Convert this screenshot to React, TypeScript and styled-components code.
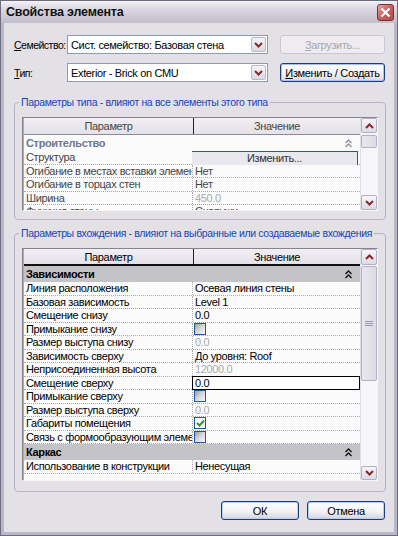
import React from 'react';
import styled, { createGlobalStyle } from 'styled-components';

const GlobalStyle = createGlobalStyle`
  html, body {
    margin: 0;
    padding: 0;
    background: #e4e1e6;
  }
  body {
    font-family: "Liberation Sans", Arial, sans-serif;
    font-size: 10.5px;
    letter-spacing: -0.35px;
    color: #000;
  }
`;

type Cell =
  | { t: 'text'; v: string }
  | { t: 'dim'; v: string }
  | { t: 'check'; on?: boolean }
  | { t: 'edit'; v: string }
  | { t: 'button'; v: string };

type Row = { cat: string } | { label: string; cell: Cell };

const typeRows: Row[] = [
  { cat: 'Строительство' },
  { label: 'Структура', cell: { t: 'button', v: 'Изменить...' } },
  { label: 'Огибание в местах вставки элемента', cell: { t: 'text', v: 'Нет' } },
  { label: 'Огибание в торцах стен', cell: { t: 'text', v: 'Нет' } },
  { label: 'Ширина', cell: { t: 'dim', v: '450.0' } },
  { label: 'Функция стены', cell: { t: 'text', v: 'Снаружи' } },
];

const instanceRows: Row[] = [
  { cat: 'Зависимости' },
  { label: 'Линия расположения', cell: { t: 'text', v: 'Осевая линия стены' } },
  { label: 'Базовая зависимость', cell: { t: 'text', v: 'Level 1' } },
  { label: 'Смещение снизу', cell: { t: 'text', v: '0.0' } },
  { label: 'Примыкание снизу', cell: { t: 'check' } },
  { label: 'Размер выступа снизу', cell: { t: 'dim', v: '0.0' } },
  { label: 'Зависимость сверху', cell: { t: 'text', v: 'До уровня: Roof' } },
  { label: 'Неприсоединенная высота', cell: { t: 'dim', v: '12000.0' } },
  { label: 'Смещение сверху', cell: { t: 'edit', v: '0.0' } },
  { label: 'Примыкание сверху', cell: { t: 'check' } },
  { label: 'Размер выступа сверху', cell: { t: 'dim', v: '0.0' } },
  { label: 'Габариты помещения', cell: { t: 'check', on: true } },
  { label: 'Связь с формообразующим элементом', cell: { t: 'check' } },
  { cat: 'Каркас' },
  { label: 'Использование в конструкции', cell: { t: 'text', v: 'Ненесущая' } },
];

const Window = styled.div`
  width: 398px;
  height: 536px;
  box-sizing: border-box;
  border: 1px solid #6d6b7e;
  background: #b9b7c8;
  display: flex;
  flex-direction: column;
  overflow: hidden;
`;

const TitleBar = styled.div`
  height: 22px;
  flex: none;
  display: flex;
  align-items: center;
  justify-content: space-between;
  padding: 0 3px 0 5px;
  background: linear-gradient(#f3f2f6 0%, #dedbe4 30%, #cdc9d4 70%, #c2bece 100%);
  font-size: 12.5px;
  font-weight: bold;
  letter-spacing: -0.2px;
  color: #111;
`;

const CloseButton = styled.div`
  width: 17px;
  height: 17px;
  box-sizing: border-box;
  border: 1px solid #7a2e2e;
  border-radius: 3px;
  background: linear-gradient(135deg, #e8a8a8 0%, #cc6464 45%, #b34848 100%);
  display: flex;
  align-items: center;
  justify-content: center;
`;

const Content = styled.div`
  flex: 1;
  margin: 0 3px 3px;
  background: #e4e1e6;
  padding: 12px 0 0 0;
  display: flex;
  flex-direction: column;
`;

const FormRow = styled.div<{ $gap?: number }>`
  display: flex;
  align-items: center;
  height: 19px;
  padding-left: 10px;
  margin-top: ${(p) => p.$gap ?? 0}px;
`;

const Label = styled.span`
  width: 53px;
  flex: none;
  font-size: 10.5px;
  letter-spacing: -0.5px;
  white-space: nowrap;
  u { text-decoration: underline; }
`;

const Select = styled.div`
  width: 201px;
  height: 19px;
  box-sizing: border-box;
  border: 1px solid #8a9bb4;
  background: #fff;
  display: flex;
  align-items: center;
  padding-left: 3px;
  white-space: nowrap;
  overflow: hidden;
  font-size: 11px;
`;

const SelectText = styled.span`
  flex: 1;
  overflow: hidden;
`;

const DropButton = styled.div`
  width: 15px;
  height: 15px;
  margin-right: 1px;
  flex: none;
  box-sizing: border-box;
  border: 1px solid #bab8c8;
  border-radius: 2px;
  background: linear-gradient(#f4f3f8, #dcd9e4);
  display: flex;
  align-items: center;
  justify-content: center;
`;

const PushButton = styled.div<{ $disabled?: boolean; $focus?: boolean; $w: number }>`
  width: ${(p) => p.$w}px;
  height: 19px;
  box-sizing: border-box;
  margin-left: 12px;
  border: 1px solid ${(p) => (p.$disabled ? '#c9c7d0' : '#1c3c7c')};
  border-radius: 3px;
  background: ${(p) =>
    p.$disabled ? '#eeecf0' : 'linear-gradient(#ffffff 0%, #f2f1f4 60%, #d9d7df 100%)'};
  box-shadow: ${(p) => (p.$focus ? 'inset 0 0 0 1px #a8c4ee' : 'none')};
  color: ${(p) => (p.$disabled ? '#a8a6b2' : '#000')};
  display: flex;
  align-items: center;
  justify-content: center;
  white-space: nowrap;
  font-size: 11px;
  u { text-decoration: underline; }
`;

const Group = styled.fieldset<{ $top: number }>`
  margin: ${(p) => p.$top}px 8px 0 10px;
  padding: 8px 7px ${(p) => (p.$top > 10 ? 8 : 10)}px 7px;
  border: 1px solid #b4b2c4;
  border-radius: 4px;
  min-width: 0;
`;

const Legend = styled.legend`
  color: #1646b4;
  padding: 0 2px;
  margin-left: -3px;
  line-height: 13px;
  white-space: nowrap;
  font-size: 10.5px;
`;

const TableFrame = styled.div<{ $h: number }>`
  height: ${(p) => p.$h}px;
  box-sizing: border-box;
  border: 1px solid #85848f;
  border-right-color: #f6f6f8;
  border-bottom-color: #f6f6f8;
  box-shadow: inset 1px 1px 0 #a9a8b3;
  background: #fbfbfc;
  display: flex;
  overflow: hidden;
`;

const GridArea = styled.div`
  flex: 1;
  min-width: 0;
  overflow: hidden;
  padding-left: 1px;
`;

const HeaderRow = styled.div<{ $strong?: boolean }>`
  height: 17px;
  box-sizing: border-box;
  display: grid;
  grid-template-columns: 169px 1fr;
  background: linear-gradient(#f1eff4, #e4e1e8);
  border-bottom: ${(p) => (p.$strong ? '2px solid #111' : '1px solid #8c8a96')};
  color: ${(p) => (p.$strong ? '#000' : '#444')};
  font-size: 11px;
`;

const HeadCell = styled.div`
  display: flex;
  align-items: center;
  justify-content: center;
  & + & {
    border-left: 1px solid #222;
  }
`;

const CatRow = styled.div<{ $muted?: boolean }>`
  height: 16px;
  display: flex;
  align-items: center;
  justify-content: space-between;
  padding: 0 8px 0 2px;
  font-weight: bold;
  font-size: 11px;
  background: ${(p) => (p.$muted ? '#fbfbfc' : '#c4c3c8')};
  color: ${(p) => (p.$muted ? '#6d7891' : '#000')};
`;

const DataRow = styled.div<{ $muted?: boolean }>`
  height: 13.5px;
  box-sizing: border-box;
  display: grid;
  grid-template-columns: 169px 1fr;
  border-bottom: 1px dotted #a9a9ad;
  color: ${(p) => (p.$muted ? '#454545' : '#000')};
  line-height: 12px;
  font-size: 11px;
`;

const NameCell = styled.div`
  padding-left: 2px;
  white-space: nowrap;
  overflow: hidden;
  border-right: 1px dotted #a9a9ad;
`;

const ValueCell = styled.div<{ $dim?: boolean }>`
  padding-left: 2px;
  white-space: nowrap;
  overflow: hidden;
  display: flex;
  align-items: center;
  color: ${(p) => (p.$dim ? '#a9a9ae' : 'inherit')};
`;

const EditCell = styled.div`
  margin: -1px 0 -1px -1px;
  border: 1px solid #000;
  padding-left: 2px;
  background: #fff;
  display: flex;
  align-items: center;
`;

const CellButton = styled.div`
  margin: 0 2px -1px -1px;
  border: 1px solid #2a54b4;
  border-left: none;
  border-bottom: none;
  background: #e9e8ee;
  color: #333;
  display: flex;
  align-items: center;
  justify-content: center;
`;

const Check = styled.div<{ $on?: boolean }>`
  width: 12px;
  height: 12px;
  box-sizing: border-box;
  margin-left: -1px;
  border: 1px solid #1c5a9c;
  background: ${(p) =>
    p.$on ? '#fff' : 'linear-gradient(135deg, #9c9ca4 0%, #d8d8dc 50%, #f8f8fa 100%)'};
  display: flex;
  align-items: center;
  justify-content: center;
`;

const ScrollBar = styled.div`
  width: 16px;
  flex: none;
  display: flex;
  flex-direction: column;
  background: #f6f5f8;
  border-left: 1px solid #e0dee6;
`;

const ScrollBtn = styled.div<{ $h: number }>`
  height: ${(p) => p.$h}px;
  flex: none;
  box-sizing: border-box;
  border: 1px solid #b2b0c2;
  border-radius: 2px;
  background: linear-gradient(#f6f5fa, #dcdae4);
  display: flex;
  align-items: center;
  justify-content: center;
`;

const Track = styled.div`
  flex: 1;
  display: flex;
  flex-direction: column;
`;

const Thumb = styled.div<{ $top: number; $h: number }>`
  margin-top: ${(p) => p.$top}px;
  height: ${(p) => p.$h}px;
  box-sizing: border-box;
  border: 1px solid #b2b0c2;
  border-radius: 2px;
  background: linear-gradient(90deg, #e8e6ee, #dedbe6);
  display: flex;
  align-items: center;
  justify-content: center;
`;

const Footer = styled.div`
  display: flex;
  justify-content: flex-end;
  gap: 8px;
  padding-right: 9px;
  margin-top: 9px;
`;

const DialogButton = styled.div`
  width: 78px;
  height: 19px;
  box-sizing: border-box;
  border: 1px solid #1c3c7c;
  border-radius: 3px;
  background: linear-gradient(#ffffff 0%, #f3f2f5 55%, #d6d4dc 100%);
  box-shadow: inset 0 0 0 1px #b4cdf0;
  display: flex;
  align-items: center;
  justify-content: center;
  font-size: 11px;
`;

const ArrowUp = () => (
  <svg width="9" height="6" viewBox="0 0 9 6">
    <path d="M1 5 L4.5 1.5 L8 5" fill="none" stroke="#862828" strokeWidth="2" />
  </svg>
);

const ArrowDown = () => (
  <svg width="9" height="6" viewBox="0 0 9 6">
    <path d="M1 1 L4.5 4.5 L8 1" fill="none" stroke="#862828" strokeWidth="2" />
  </svg>
);

const Collapse = ({ color }: { color: string }) => (
  <svg width="7" height="9" viewBox="0 0 7 9">
    <path d="M0.5 4 L3.5 1 L6.5 4 M0.5 8 L3.5 5 L6.5 8" fill="none" stroke={color} strokeWidth="1.4" />
  </svg>
);

const Grip = () => (
  <svg width="8" height="6" viewBox="0 0 8 6">
    <path d="M0 0.5 H8 M0 2.5 H8 M0 4.5 H8" stroke="#9a98aa" strokeWidth="1" />
  </svg>
);

const Tick = () => (
  <svg width="9" height="8" viewBox="0 0 9 8">
    <path d="M1 4 L3.5 6.5 L8 1.5" fill="none" stroke="#21a121" strokeWidth="2" />
  </svg>
);

const renderCell = (c: Cell) => {
  switch (c.t) {
    case 'text':
      return <ValueCell>{c.v}</ValueCell>;
    case 'dim':
      return <ValueCell $dim>{c.v}</ValueCell>;
    case 'edit':
      return <EditCell>{c.v}</EditCell>;
    case 'button':
      return <CellButton>{c.v}</CellButton>;
    case 'check':
      return (
        <ValueCell>
          <Check $on={c.on}>{c.on && <Tick />}</Check>
        </ValueCell>
      );
  }
};

type TableProps = {
  rows: Row[];
  height: number;
  muted?: boolean;
  upH: number;
  downH: number;
  thumbTop: number;
  thumbH: number;
};

const PropTable = ({ rows, height, muted, upH, downH, thumbTop, thumbH }: TableProps) => (
  <TableFrame $h={height}>
    <GridArea>
      <HeaderRow $strong={!muted}>
        <HeadCell>Параметр</HeadCell>
        <HeadCell>Значение</HeadCell>
      </HeaderRow>
      {rows.map((r, i) =>
        'cat' in r ? (
          <CatRow key={i} $muted={muted}>
            <span>{r.cat}</span>
            <Collapse color={muted ? '#8a90a0' : '#111'} />
          </CatRow>
        ) : (
          <DataRow key={i} $muted={muted}>
            <NameCell>{r.label}</NameCell>
            {renderCell(r.cell)}
          </DataRow>
        )
      )}
    </GridArea>
    <ScrollBar>
      <ScrollBtn $h={upH}>
        <ArrowUp />
      </ScrollBtn>
      <Track>
        <Thumb $top={thumbTop} $h={thumbH}>
          {thumbH > 40 && <Grip />}
        </Thumb>
      </Track>
      <ScrollBtn $h={downH}>
        <ArrowDown />
      </ScrollBtn>
    </ScrollBar>
  </TableFrame>
);

export default function App() {
  return (
    <>
      <GlobalStyle />
      <Window>
        <TitleBar>
          <span>Свойства элемента</span>
          <CloseButton>
            <svg width="11" height="11" viewBox="0 0 11 11">
              <path d="M1.5 1.5 L9.5 9.5 M9.5 1.5 L1.5 9.5" stroke="#fff" strokeWidth="2.2" />
            </svg>
          </CloseButton>
        </TitleBar>
        <Content>
          <FormRow>
            <Label>
              <u>С</u>емейство:
            </Label>
            <Select>
              <SelectText>Сист. семейство: Базовая стена</SelectText>
              <DropButton>
                <ArrowDown />
              </DropButton>
            </Select>
            <PushButton $disabled $w={105}>
              <u>З</u>агрузить...
            </PushButton>
          </FormRow>
          <FormRow $gap={9}>
            <Label>
              <u>Т</u>ип:
            </Label>
            <Select>
              <SelectText>Exterior - Brick on CMU</SelectText>
              <DropButton>
                <ArrowDown />
              </DropButton>
            </Select>
            <PushButton $focus $w={105}>
              <u>И</u>зменить / Создать
            </PushButton>
          </FormRow>

          <Group $top={14}>
            <Legend>Параметры типа - влияют на все элементы этого типа</Legend>
            <PropTable rows={typeRows} height={94} muted upH={15} downH={15} thumbTop={2} thumbH={13} />
          </Group>

          <Group $top={7}>
            <Legend>Параметры вхождения - влияют на выбранные или создаваемые вхождения</Legend>
            <PropTable rows={instanceRows} height={233} upH={16} downH={14} thumbTop={1} thumbH={115} />
          </Group>

          <Footer>
            <DialogButton>ОК</DialogButton>
            <DialogButton>Отмена</DialogButton>
          </Footer>
        </Content>
      </Window>
    </>
  );
}
